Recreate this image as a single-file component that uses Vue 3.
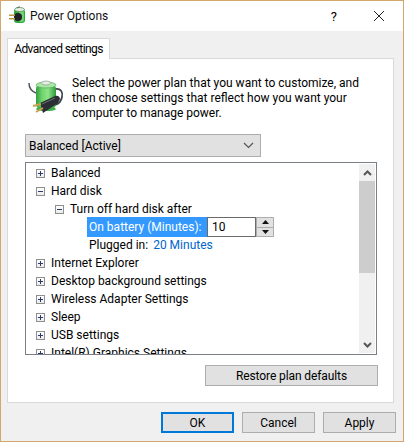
<script setup>
const topItems = ['Internet Explorer', 'Desktop background settings', 'Wireless Adapter Settings', 'Sleep', 'USB settings', 'Intel(R) Graphics Settings']
</script>

<template>
  <div class="window">
    <div class="titlebar">
      <svg class="app-icon" width="20" height="20" viewBox="0 0 20 20">
        <path d="M6 5c0-2 2-4 5-4" fill="none" stroke="#333" stroke-width="1" />
        <rect x="5" y="3" width="11" height="14" rx="3" fill="#2fa63e" />
        <rect x="10" y="4" width="5" height="12" rx="2" fill="#6fd070" />
        <ellipse cx="10.500" cy="3.500" rx="5" ry="2" fill="#e4f2e4" stroke="#4d7d4d" stroke-width="0.7" />
        <circle cx="9" cy="11" r="4" fill="#1f2124" />
        <rect x="0" y="8.500" width="6" height="1.500" fill="#b8963f" />
        <rect x="0" y="12" width="6" height="1.500" fill="#b8963f" />
      </svg>
      <span class="title">Power Options</span>
      <span class="help">?</span>
      <svg class="close" width="12" height="12" viewBox="0 0 12 12">
        <path d="M1 1l10 10M11 1L1 11" stroke="#222" stroke-width="1" fill="none" />
      </svg>
    </div>

    <div class="body">
      <div class="tabstrip">
        <div class="tab">Advanced settings</div>
      </div>
      <div class="panel">
        <div class="intro">
          <svg class="battery" width="36" height="36" viewBox="0 0 36 36">
            <defs>
              <linearGradient id="batt" x1="0" x2="1" y1="0" y2="0">
                <stop offset="0" stop-color="#2f9e3c" />
                <stop offset="0.3" stop-color="#6fd46c" />
                <stop offset="0.6" stop-color="#8fe486" />
                <stop offset="1" stop-color="#2c9a3a" />
              </linearGradient>
            </defs>
            <path d="M1 3c0 5 2 8 7 10" fill="none" stroke="#4c5560" stroke-width="1.500" />
            <path d="M27 9c6-1 8 3 7 8s-3 7-7 8" fill="none" stroke="#3f4650" stroke-width="1.800" />
            <rect x="8" y="4" width="20" height="25" rx="5" fill="url(#batt)" />
            <ellipse cx="18" cy="29" rx="10" ry="2" fill="#3cab48" />
            <ellipse cx="18" cy="5" rx="10" ry="3" fill="#a7e8a3" stroke="#5aa860" stroke-width="0.700" />
            <ellipse cx="18" cy="3" rx="4.500" ry="2" fill="#e6ebe6" stroke="#8aa38a" stroke-width="0.700" />
            <path d="M12 23l15-7c2-1 5 0 5 3l-2 4-15 10z" fill="#2b2e33" />
            <path d="M14 24l13-6" stroke="#6a7078" stroke-width="1" fill="none" />
            <path d="M5 26l8-2M8 32l7-4" stroke="#c9a24c" stroke-width="2" fill="none" />
          </svg>
          <p class="intro-text">Select the power plan that you want to customize, and then choose settings that reflect how you want your computer to manage power.</p>
        </div>

        <div class="plan-select">
          <span>Balanced [Active]</span>
          <svg width="11" height="7" viewBox="0 0 11 7">
            <path d="M1 1l4.500 4.500L10 1" fill="none" stroke="#555" stroke-width="1.200" />
          </svg>
        </div>

        <div class="tree">
          <div class="tree-list">
            <div class="row lvl0"><span class="box plus"></span>Balanced</div>
            <div class="row lvl0"><span class="box minus"></span>Hard disk</div>
            <div class="row lvl1"><span class="box minus"></span>Turn off hard disk after</div>
            <div class="row lvl2">
              <span class="selected">On battery (Minutes):</span>
              <span class="value-input">10</span>
              <span class="spinner">
                <span class="spin-btn">
                  <svg width="7" height="4" viewBox="0 0 7 4"><path d="M3.500 0L7 4H0z" fill="#111" /></svg>
                </span>
                <span class="spin-btn">
                  <svg width="7" height="4" viewBox="0 0 7 4"><path d="M0 0h7L3.500 4z" fill="#111" /></svg>
                </span>
              </span>
            </div>
            <div class="row lvl2 plugged">Plugged in:<span class="link">20 Minutes</span></div>
            <div v-for="item in topItems" :key="item" class="row lvl0">
              <span class="box plus"></span>{{ item }}
            </div>
          </div>
          <div class="scrollbar">
            <div class="arrow">
              <svg width="9" height="6" viewBox="0 0 9 6"><path d="M1 5l3.500-3.500L8 5" fill="none" stroke="#555" stroke-width="2" /></svg>
            </div>
            <div class="thumb"></div>
            <div class="track"></div>
            <div class="arrow">
              <svg width="9" height="6" viewBox="0 0 9 6"><path d="M1 1l3.500 3.500L8 1" fill="none" stroke="#555" stroke-width="2" /></svg>
            </div>
          </div>
        </div>

        <div class="restore-row">
          <button class="btn restore">Restore plan defaults</button>
        </div>
      </div>

      <div class="actions">
        <button class="btn action default">OK</button>
        <button class="btn action">Cancel</button>
        <button class="btn action">Apply</button>
      </div>
    </div>
  </div>
</template>

<style scoped>
.window {
  width: 404px;
  height: 442px;
  box-sizing: border-box;
  border: 1px solid #d2a76c;
  background: #fff;
  display: flex;
  flex-direction: column;
  font-family: Roboto, "Open Sans", sans-serif;
  font-size: 12px;
  color: #000;
  overflow: hidden;
}
.titlebar {
  height: 30px;
  flex: none;
  display: flex;
  align-items: center;
  padding-left: 8px;
}
.app-icon {
  margin-right: 1px;
}
.title {
  flex: 1;
  color: #111;
}
.help {
  margin-right: 36px;
  font-size: 13px;
}
.close {
  margin-right: 18px;
}
.body {
  flex: 1;
  background: #f0f0f0;
  display: flex;
  flex-direction: column;
  padding: 7px 8px 0 6px;
}
.tabstrip {
  display: flex;
  height: 20px;
  flex: none;
}
.tab {
  width: 103px;
  height: 21px;
  box-sizing: border-box;
  border: 1px solid #d9d9d9;
  border-bottom: 0;
  background: #fff;
  text-align: center;
  line-height: 20px;
  letter-spacing: -0.6px;
  white-space: nowrap;
  position: relative;
  z-index: 1;
}
.panel {
  width: 387px;
  height: 345px;
  box-sizing: border-box;
  border: 1px solid #d9d9d9;
  background: #fff;
  padding: 17px 16px 0 17px;
}
.intro {
  display: flex;
  height: 58px;
}
.battery {
  margin: 4px 0 0 3px;
  flex: none;
}
.intro-text {
  margin: 0 0 0 8px;
  line-height: 15px;
  width: 296px;
}
.plan-select {
  width: 236px;
  height: 23px;
  box-sizing: border-box;
  border: 1px solid #adadad;
  background: #e1e1e1;
  display: flex;
  align-items: center;
  justify-content: space-between;
  padding: 0 6px 0 3px;
}
.tree {
  width: 352px;
  height: 193px;
  margin-top: 5px;
  box-sizing: border-box;
  border: 1px solid #7a7f87;
  display: flex;
  overflow: hidden;
}
.tree-list {
  flex: 1;
  padding-top: 1px;
}
.row {
  height: 18px;
  line-height: 18px;
  display: flex;
  align-items: center;
  white-space: nowrap;
}
.lvl0 {
  padding-left: 10px;
}
.lvl1 {
  padding-left: 29px;
}
.lvl2 {
  padding-left: 61px;
}
.box {
  width: 9px;
  height: 9px;
  box-sizing: border-box;
  border: 1px solid #8e8f8f;
  background: linear-gradient(#fff, #ebebeb);
  margin-right: 6px;
  flex: none;
  position: relative;
}
.box::before {
  content: "";
  position: absolute;
  left: 1px;
  top: 3px;
  width: 5px;
  height: 1px;
  background: #2b3a6b;
}
.plus::after {
  content: "";
  position: absolute;
  left: 3px;
  top: 1px;
  width: 1px;
  height: 5px;
  background: #2b3a6b;
}
.selected {
  background: #3399ff;
  color: #fff;
  width: 120px;
  height: 20px;
  line-height: 20px;
  padding-left: 2px;
  box-sizing: border-box;
  flex: none;
}
.value-input {
  width: 49px;
  height: 20px;
  box-sizing: border-box;
  border: 1px solid #6a6a6a;
  line-height: 18px;
  padding-left: 4px;
  flex: none;
}
.spinner {
  width: 18px;
  height: 20px;
  box-sizing: border-box;
  border: 1px solid #adadad;
  background: #adadad;
  display: flex;
  flex-direction: column;
  gap: 1px;
  flex: none;
}
.spin-btn {
  flex: 1;
  background: #e1e1e1;
  display: flex;
  align-items: center;
  justify-content: center;
}
.plugged .link {
  margin-left: 5px;
  color: #0066cc;
}
.plugged {
  padding-left: 63px;
}
.scrollbar {
  width: 16px;
  margin: 1px 1px 1px 0;
  display: flex;
  flex-direction: column;
  background: #f0f0f0;
  flex: none;
}
.arrow {
  height: 17px;
  display: flex;
  align-items: center;
  justify-content: center;
  flex: none;
}
.thumb {
  height: 92px;
  background: #cdcdcd;
  flex: none;
}
.track {
  flex: 1;
}
.restore-row {
  display: flex;
  justify-content: flex-end;
  margin-top: 10px;
  margin-right: -1px;
}
.btn {
  font-family: inherit;
  font-size: 12px;
  color: #000;
  background: #e1e1e1;
  border: 1px solid #adadad;
  padding: 0;
  box-sizing: border-box;
}
.restore {
  width: 173px;
  height: 21px;
  letter-spacing: -0.1px;
}
.actions {
  display: flex;
  justify-content: flex-end;
  gap: 8px;
  margin-top: 9px;
  margin-right: -1px;
}
.action {
  width: 73px;
  height: 21px;
}
.default {
  border: 2px solid #0078d7;
}
</style>
